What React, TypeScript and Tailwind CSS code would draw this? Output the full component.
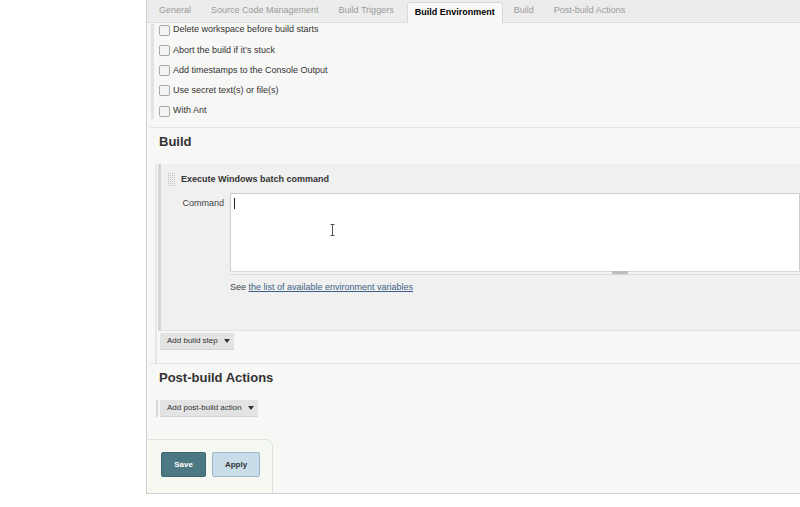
import React from 'react'

const tabs = [
  { label: 'General' },
  { label: 'Source Code Management' },
  { label: 'Build Triggers' },
  { label: 'Build Environment', active: true },
  { label: 'Build' },
  { label: 'Post-build Actions' },
]

const envOptions = [
  'Delete workspace before build starts',
  'Abort the build if it’s stuck',
  'Add timestamps to the Console Output',
  'Use secret text(s) or file(s)',
  'With Ant',
]

const Caret = () => (
  <svg width="6" height="4" viewBox="0 0 6 4" className="ml-[6px]">
    <path d="M0 0 L6 0 L3 4 Z" fill="#333" />
  </svg>
)

// dotted drag handle of a build step
const DragHandle = () => {
  const dots = []
  for (let r = 0; r < 7; r++) {
    for (let c = 0; c < 4; c++) {
      dots.push(<rect key={`${r}-${c}`} x={c * 2} y={r * 2} width="1" height="1" fill="#bdbdbd" />)
    }
  }
  return (
    <svg width="8" height="14" viewBox="0 0 8 14">
      {dots}
    </svg>
  )
}

const App = () => {
  return (
    <div className="flex w-[800px] h-[507px] overflow-hidden bg-white font-['Liberation_Sans',Arial,sans-serif] text-[#333]">
      {/* left gutter */}
      <div className="w-[146px] shrink-0" />

      {/* config panel */}
      <div className="flex flex-col w-[654px] h-[494px] shrink-0 border-l border-b border-[#cfcfcf] bg-[#f7f7f6]">
        {/* Tabs */}
        <div className="flex items-end h-[23px] shrink-0 pl-[2px] bg-[#ececec] border-b border-[#dcdcdc] text-[9px] whitespace-nowrap">
          {tabs.map((t) =>
            t.active ? (
              <div
                key={t.label}
                className="ml-[3px] mr-[1px] h-[21px] px-[7px] flex items-center bg-[#f8f8f8] border border-b-0 border-[#d8d8d8] rounded-t-[3px] font-bold text-black -mb-px"
              >
                {t.label}
              </div>
            ) : (
              <div key={t.label} className="h-[23px] px-[10px] flex items-center text-[#9a9a9a]">
                {t.label}
              </div>
            )
          )}
        </div>

        {/* Build Environment options */}
        <div className="ml-[4px] mt-px h-[95px] overflow-hidden border-l-[3px] border-[#e2e2e2] pl-[5px]">
          <div className="flex flex-col -mt-[4px]">
            {envOptions.map((o) => (
              <div key={o} className="flex items-center h-[20.25px] gap-[3px] text-[9px] text-[#333]">
                <span className="w-[11px] h-[11px] rounded-[2px] border border-[#a9a9a9] bg-[#f4f4f4]" />
                <span>{o}</span>
              </div>
            ))}
          </div>
        </div>

        {/* Build section */}
        <div className="ml-[3px] mt-[8px] border-t border-[#e4e4e4]">
          <div className="h-[28px] flex items-center pl-[9px] text-[13px] font-bold text-[#333]">Build</div>

          <div className="ml-[5px] mt-[8px] border-l-[2px] border-[#e6e6e6]">
            <div className="ml-[1px] border-l-[3px] border-[#d6d6d6] bg-[#f0f0f0] border-b border-b-[#e2e2e2] h-[167px] flex flex-col">
              <div className="flex items-center h-[29px] pl-[7px] pt-[3px]">
                <DragHandle />
                <span className="ml-[5px] text-[9px] font-bold text-[#333]">Execute Windows batch command</span>
              </div>
              <div className="flex">
                <div className="w-[63px] shrink-0 text-right text-[9px] text-[#444] pt-[4px]">Command</div>
                <div className="ml-[6px] flex-1 flex flex-col">
                  <div className="relative h-[78px] bg-white border border-[#cdcdcd] border-b-0">
                    <div className="absolute left-[3px] top-[4px] w-px h-[11px] bg-[#222]" />
                    <svg
                      className="absolute left-[99px] top-[30px]"
                      width="5"
                      height="12"
                      viewBox="0 0 5 12"
                    >
                      <path d="M0.5 0.5 H4.5 M2.5 0.5 V11.5 M0.5 11.5 H4.5" stroke="#555" strokeWidth="1" fill="none" />
                    </svg>
                  </div>
                  <div className="relative h-[4px] border-t border-b border-[#d8d8d8] bg-[#f4f4f4]">
                    <div className="absolute left-[382px] -top-px w-[16px] h-[3px] bg-[#bdbdbd]" />
                  </div>
                  <div className="mt-[6px] text-[9px] text-[#444]">
                    See <span className="text-[#3d5f85] underline">the list of available environment variables</span>
                  </div>
                </div>
              </div>
            </div>
            <div className="flex pt-[2px] pb-[13px]">
              <div className="ml-[3px] h-[17px] w-[74px] flex items-center pl-[7px] bg-[#e3e3e3] border-b border-[#d6d6d6] text-[8px] text-[#333]">
                Add build step
                <Caret />
              </div>
            </div>
          </div>
        </div>

        {/* Post-build section */}
        <div className="ml-[3px] border-t border-[#e4e4e4]">
          <div className="h-[28px] flex items-center pl-[9px] text-[13px] font-bold text-[#333]">Post-build Actions</div>
          <div className="flex mt-[8px] ml-[6px]">
            <div className="w-[2px] h-[17px] bg-[#d8d8d8]" />
            <div className="ml-[2px] h-[17px] w-[98px] flex items-center pl-[7px] bg-[#e3e3e3] border-b border-[#d6d6d6] text-[8px] text-[#333]">
              Add post-build action
              <Caret />
            </div>
          </div>
        </div>

        {/* Save / Apply bar */}
        <div className="mt-auto flex">
          <div className="w-[126px] h-[54px] flex gap-[6px] pl-[14px] pt-[12px] bg-[#f5f9f2] border-t border-r border-[#dde5d6] rounded-tr-[7px]">
            <div className="w-[45px] h-[25px] flex items-center justify-center rounded-[2px] bg-[#4b7883] border border-[#3e6670] text-white text-[8px] font-bold">
              Save
            </div>
            <div className="w-[48px] h-[25px] flex items-center justify-center rounded-[2px] bg-[#c8dcea] border border-[#9fb7c8] text-[#333] text-[8px] font-bold">
              Apply
            </div>
          </div>
        </div>
      </div>
    </div>
  )
}

export default App
